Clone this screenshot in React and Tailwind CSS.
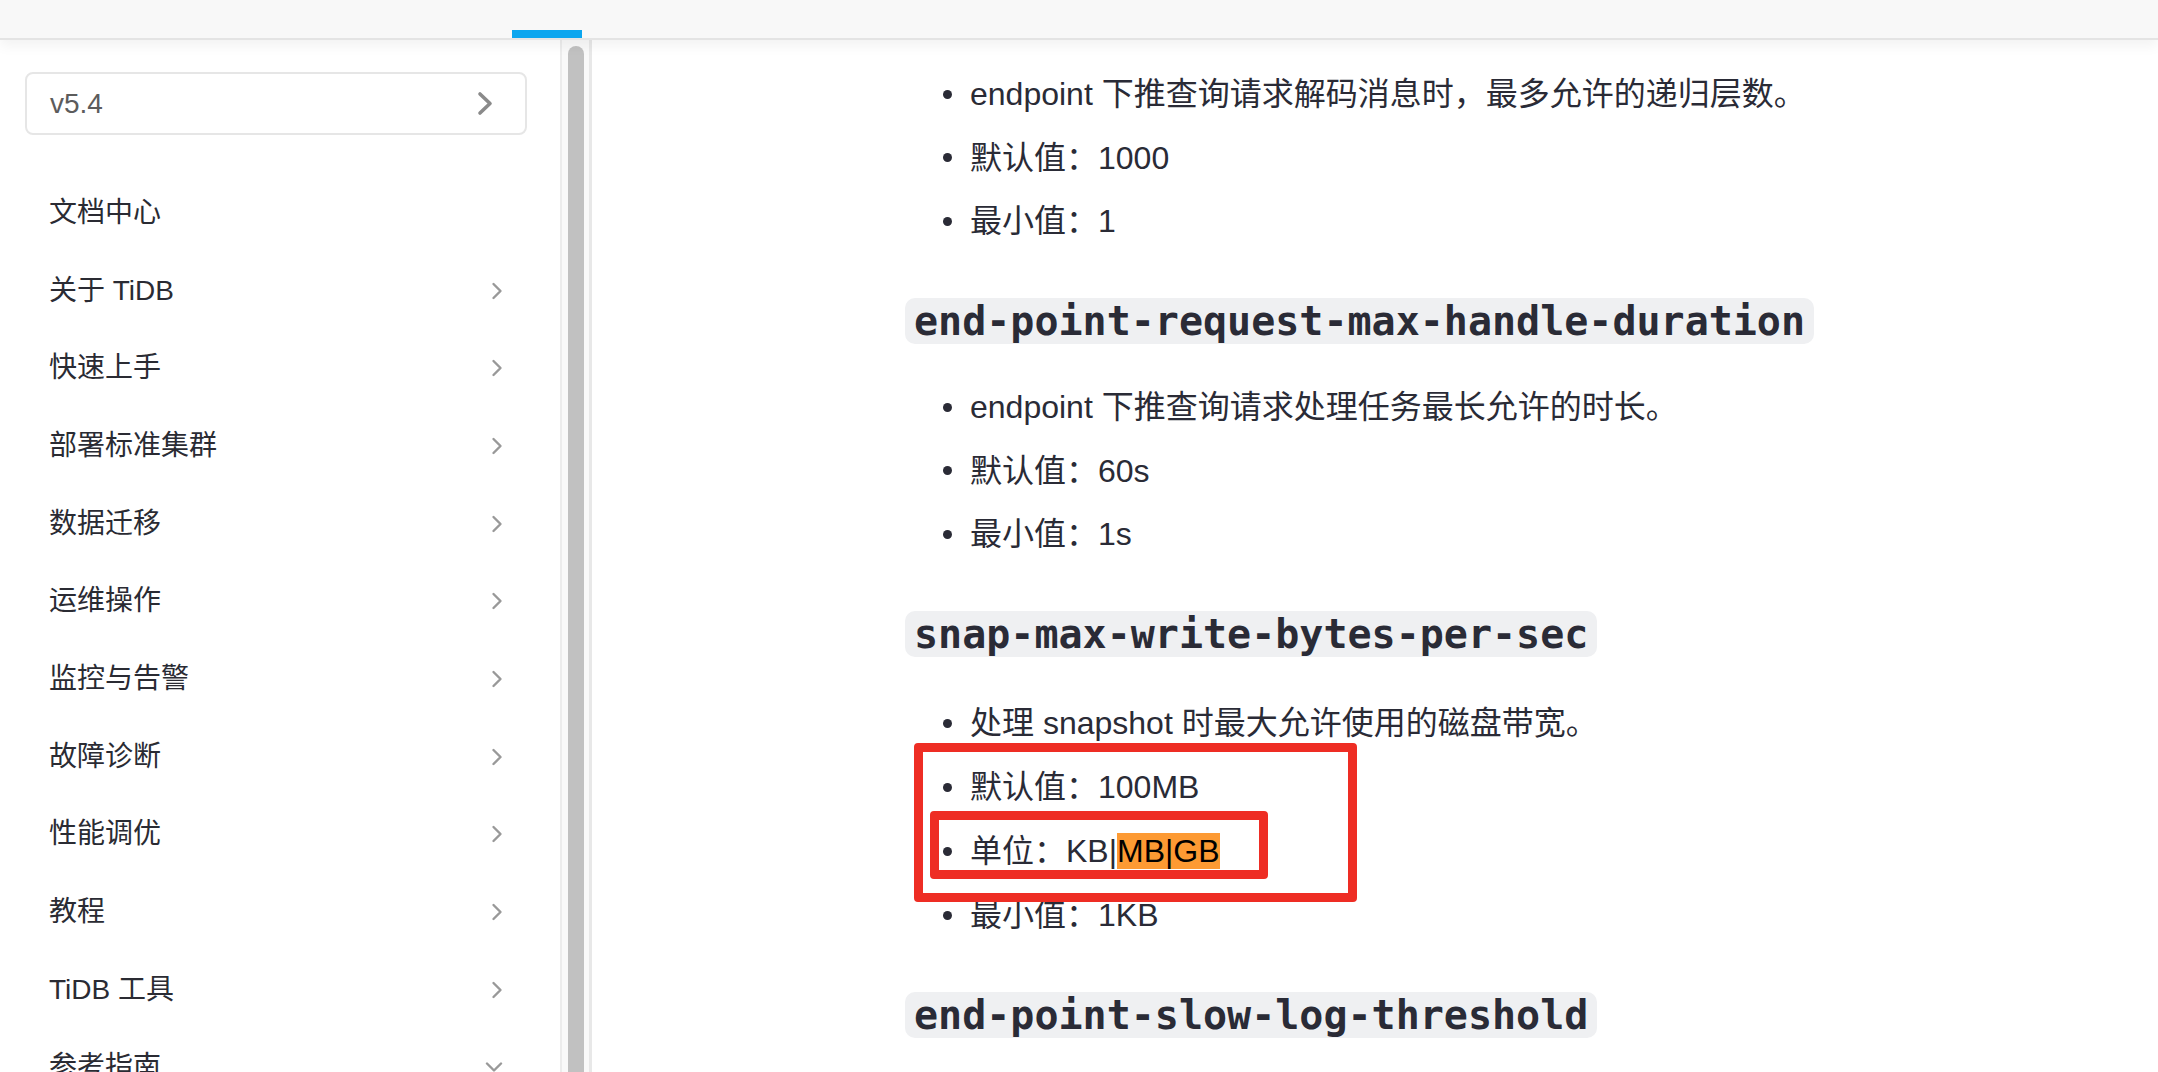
const navItems = [
  { label: '文档中心', arrow: null },
  { label: '关于 TiDB', arrow: 'right' },
  { label: '快速上手', arrow: 'right' },
  { label: '部署标准集群', arrow: 'right' },
  { label: '数据迁移', arrow: 'right' },
  { label: '运维操作', arrow: 'right' },
  { label: '监控与告警', arrow: 'right' },
  { label: '故障诊断', arrow: 'right' },
  { label: '性能调优', arrow: 'right' },
  { label: '教程', arrow: 'right' },
  { label: 'TiDB 工具', arrow: 'right' },
  { label: '参考指南', arrow: 'down' },
];

export default function App() {
  return (
    <div className="h-screen w-full overflow-hidden bg-white text-[#2a2b36] font-['Liberation_Sans','Noto_Sans_CJK_SC',sans-serif]">
      {/* Top bar */}
      <header className="relative z-10 h-[40px] bg-[#f8f8f8] border-b-2 border-[#e4e4e4] shadow-[0_6px_12px_rgba(0,0,0,0.05)]">
        <div className="absolute left-[512px] bottom-0 w-[70px] h-[8px] bg-[#0ba6ef]"></div>
      </header>

      <div className="flex h-[calc(100vh-40px)]">
        {/* Sidebar */}
        <aside className="w-[560px] shrink-0 overflow-hidden">
          <div className="mt-[32px] ml-[25px] w-[502px] h-[63px] border-2 border-[#e6e6e6] rounded-[8px] flex items-center justify-between pl-[23px] pr-[32px]">
            <span className="text-[28px] text-[#5c5c5c]">v5.4</span>
            <svg width="16" height="25" viewBox="0 0 16 25" fill="none" stroke="#8a8a8a" strokeWidth="3.6" strokeLinecap="round" strokeLinejoin="round">
              <polyline points="3,3 13,12.5 3,22" />
            </svg>
          </div>
          <nav className="mt-[39px]">
            {navItems.map((item) => (
              <div key={item.label} className="h-[77.7px] flex items-center justify-between pl-[49px] pr-[57px]">
                <span className="text-[28px] text-[#2a2b33]">{item.label}</span>
                {item.arrow === 'right' && (
                  <svg width="12" height="18" viewBox="0 0 12 18" fill="none" stroke="#999999" strokeWidth="2.4" strokeLinecap="round" strokeLinejoin="round">
                    <polyline points="2.5,2 9.5,9 2.5,16" />
                  </svg>
                )}
                {item.arrow === 'down' && (
                  <svg width="18" height="12" viewBox="0 0 18 12" fill="none" stroke="#999999" strokeWidth="2.4" strokeLinecap="round" strokeLinejoin="round">
                    <polyline points="2,2.5 9,9.5 16,2.5" />
                  </svg>
                )}
              </div>
            ))}
          </nav>
        </aside>

        {/* Sidebar scrollbar */}
        <div className="w-[32px] shrink-0 overflow-hidden bg-[#f9f9f9] border-l-2 border-l-[#ececec] border-r-[3px] border-r-[#e8e8e8]">
          <div className="ml-[6px] mt-[6px] w-[16px] h-[1200px] rounded-full bg-[#c1c1c1]"></div>
        </div>

        {/* Content */}
        <main className="flex-1 overflow-hidden">
          <div className="pl-[313px] pt-[30px]">
            <BulletList
              items={[
                'endpoint 下推查询请求解码消息时，最多允许的递归层数。',
                '默认值：1000',
                '最小值：1',
              ]}
            />

            <CodeHeading>end-point-request-max-handle-duration</CodeHeading>
            <BulletList
              items={[
                'endpoint 下推查询请求处理任务最长允许的时长。',
                '默认值：60s',
                '最小值：1s',
              ]}
            />

            <CodeHeading>snap-max-write-bytes-per-sec</CodeHeading>
            <div className="pt-[3px] flex flex-col gap-[16px]">
              <Bullet>处理 snapshot 时最大允许使用的磁盘带宽。</Bullet>
              <div className="relative flex flex-col gap-[16px]">
                <Bullet>默认值：100MB</Bullet>
                <Bullet>
                  单位：KB|<span className="bg-[#fd9a33] text-black">MB|GB</span>
                </Bullet>
                {/* annotation boxes */}
                <div className="absolute left-[9px] top-[-20px] w-[443px] h-[159px] border-[9px] border-[#ee2d24] rounded-[4px]"></div>
                <div className="absolute left-[25px] top-[48px] w-[338px] h-[68px] border-[9px] border-[#ee2d24] rounded-[4px]"></div>
              </div>
              <Bullet>最小值：1KB</Bullet>
            </div>

            <CodeHeading>end-point-slow-log-threshold</CodeHeading>
          </div>
        </main>
      </div>
    </div>
  );
}

function BulletList({ items }) {
  return (
    <div className="flex flex-col gap-[15.5px]">
      {items.map((t) => (
        <Bullet key={t}>{t}</Bullet>
      ))}
    </div>
  );
}

function Bullet({ children }) {
  return (
    <div className="h-[48px] flex items-center pl-[38px] text-[32px] whitespace-nowrap">
      <span className="w-[9px] h-[9px] rounded-full bg-[#2a2b36] shrink-0"></span>
      <span className="ml-[18px]">{children}</span>
    </div>
  );
}

function CodeHeading({ children }) {
  return (
    <div className="mt-[53px] mb-[39px]">
      <code className="inline-block h-[46px] leading-[46px] px-[9px] rounded-[10px] bg-[#eff0f2] text-[40px] font-bold text-[#2a2b36] font-['DejaVu_Sans_Mono',monospace]">
        {children}
      </code>
    </div>
  );
}
